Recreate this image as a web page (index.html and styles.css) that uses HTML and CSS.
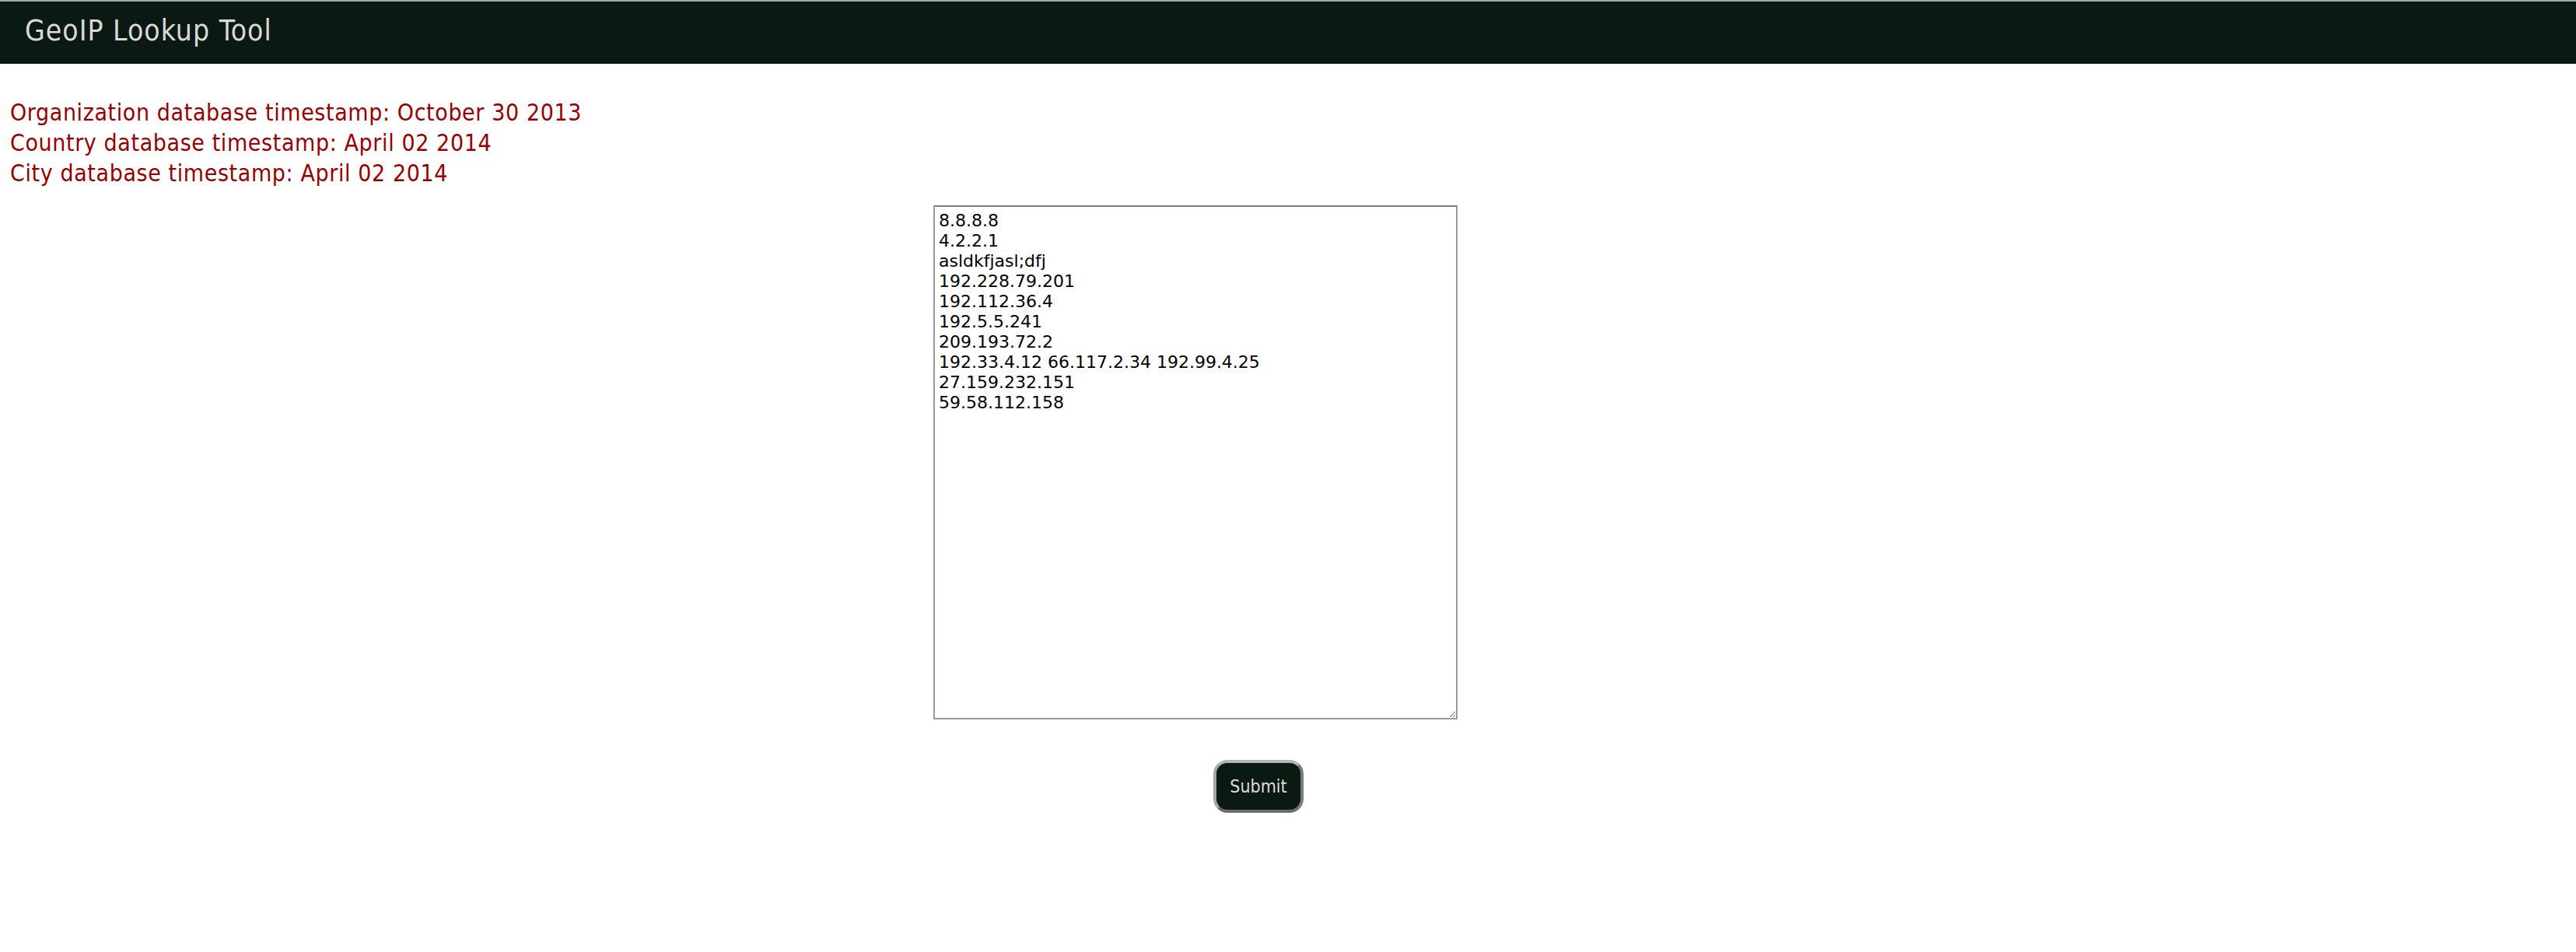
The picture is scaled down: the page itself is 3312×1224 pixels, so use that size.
FILE: index.html
```html
<!DOCTYPE html>
<html>
<head>
<meta charset="utf-8">
<title>GeoIP Lookup Tool</title>
<link rel="stylesheet" href="styles.css">
</head>
<body>
<header class="topbar">
  <h1 class="title">GeoIP Lookup Tool</h1>
</header>
<div class="stamps">
  <div class="stamp">Organization database timestamp: October 30 2013</div>
  <div class="stamp">Country database timestamp: April 02 2014</div>
  <div class="stamp">City database timestamp: April 02 2014</div>
</div>
<form class="lookup">
  <textarea class="ips">8.8.8.8
4.2.2.1
asldkfjasl;dfj
192.228.79.201
192.112.36.4
192.5.5.241
209.193.72.2
192.33.4.12 66.117.2.34 192.99.4.25
27.159.232.151
59.58.112.158</textarea>
  <div class="actions">
    <button type="button" class="submit">Submit</button>
  </div>
</form>
</body>
</html>
```
FILE: styles.css
```css
html, body {
  margin: 0;
  padding: 0;
  background: #ffffff;
}
body {
  font-family: "DejaVu Sans Condensed", "DejaVu Sans", sans-serif;
}
.topbar {
  height: 80px;
  border-top: 2px solid #a8a8a8;
  background: #0a1912;
  display: flex;
  align-items: flex-start;
}
.title {
  margin: 0;
  padding: 17px 0 0 32px;
  font-size: 37px;
  font-weight: normal;
  line-height: 42px;
  letter-spacing: 1px;
  color: #d9d9d9;
}
.stamps {
  padding: 43px 0 0 13px;
}
.stamp {
  font-size: 30px;
  line-height: 39px;
  letter-spacing: 0.6px;
  color: #990000;
}
.lookup {
  display: flex;
  flex-direction: column;
  align-items: flex-start;
  padding-top: 22px;
}
.ips {
  box-sizing: border-box;
  margin: 0 0 0 1200px;
  width: 674px;
  height: 661px;
  padding: 5px 5px;
  border: 2px solid;
  border-color: #7c7c7c #9a9a9a #9a9a9a #9a9a9a;
  font-family: "DejaVu Sans", sans-serif;
  font-size: 22px;
  line-height: 26px;
  color: #000;
  resize: both;
  outline: none;
}
.actions {
  padding: 52px 0 0 1560px;
}
.submit {
  box-sizing: border-box;
  width: 116px;
  height: 68px;
  border: 4px solid;
  border-color: #b4b4b4 #7a7a7a #6c6c6c #a6a6a6;
  border-radius: 18px;
  background: #0a1912;
  color: #dcdcdc;
  font-family: "DejaVu Sans Condensed", "DejaVu Sans", sans-serif;
  font-size: 23px;
  padding: 0;
  cursor: pointer;
}
```
